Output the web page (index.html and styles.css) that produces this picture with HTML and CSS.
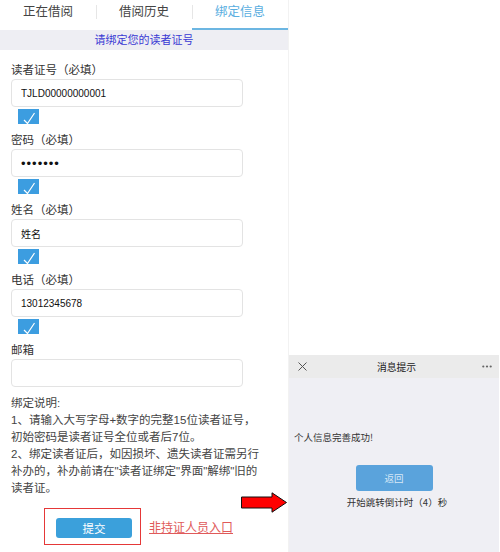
FILE: index.html
```html
<!DOCTYPE html>
<html>
<head>
    <meta charset="utf-8">
    <title>绑定信息</title>
    <link rel="stylesheet" href="styles.css">
</head>
<body>
<div class="page">
    <div class="phone">
        <div class="tabs">
            <div class="tab">正在借阅</div>
            <div class="tab">借阅历史</div>
            <div class="tab active">绑定信息</div>
        </div>
        <div class="notice">请绑定您的读者证号</div>
        <form class="form">
            <div class="field">
                <label>读者证号（必填）</label>
                <input class="input" type="text" value="TJLD00000000001">
                <span class="check"><svg width="21" height="15" viewBox="0 0 21 15"><path d="M6 11 L9.5 14.5 L16.5 4" fill="none" stroke="#fff" stroke-width="1.2"/></svg></span>
            </div>
            <div class="field">
                <label>密码（必填）</label>
                <input class="input pwd" type="password" value="1234567">
                <span class="check"><svg width="21" height="15" viewBox="0 0 21 15"><path d="M6 11 L9.5 14.5 L16.5 4" fill="none" stroke="#fff" stroke-width="1.2"/></svg></span>
            </div>
            <div class="field">
                <label>姓名（必填）</label>
                <input class="input" type="text" value="姓名">
                <span class="check"><svg width="21" height="15" viewBox="0 0 21 15"><path d="M6 11 L9.5 14.5 L16.5 4" fill="none" stroke="#fff" stroke-width="1.2"/></svg></span>
            </div>
            <div class="field">
                <label>电话（必填）</label>
                <input class="input" type="text" value="13012345678">
                <span class="check"><svg width="21" height="15" viewBox="0 0 21 15"><path d="M6 11 L9.5 14.5 L16.5 4" fill="none" stroke="#fff" stroke-width="1.2"/></svg></span>
            </div>
            <div class="field">
                <label>邮箱</label>
                <input class="input" type="text" value="">
            </div>
            <div class="tips">
                绑定说明:<br>
                1、请输入大写字母+数字的完整15位读者证号，<br>
                初始密码是读者证号全位或者后7位。<br>
                2、绑定读者证后，如因损坏、遗失读者证需另行<br>
                补办的，补办前请在"读者证绑定"界面"解绑"旧的<br>
                读者证。
            </div>
            <div class="actions">
                <div class="mark">
                    <button class="submit" type="button">提交</button>
                </div>
                <a class="other" href="#">非持证人员入口</a>
            </div>
        </form>
    </div>
    <div class="dialog">
        <div class="dialog-head">
            <svg class="close" width="9" height="9" viewBox="0 0 9 9"><path d="M0.5 0.5 L8.5 8.5 M8.5 0.5 L0.5 8.5" stroke="#555" stroke-width="1"/></svg>
            <span class="dialog-title">消息提示</span>
            <svg class="more" width="10" height="3" viewBox="0 0 10 3"><circle cx="1.3" cy="1.5" r="1.1" fill="#666"/><circle cx="5" cy="1.5" r="1.1" fill="#666"/><circle cx="8.7" cy="1.5" r="1.1" fill="#666"/></svg>
        </div>
        <div class="dialog-body">
            <p class="msg">个人信息完善成功!</p>
            <button class="back" type="button">返回</button>
            <p class="count">开始跳转倒计时（4）秒</p>
        </div>
    </div>
    <svg class="arrow" width="47" height="21" viewBox="0 0 47 21">
        <polygon points="0.5,5 31,5 31,0.8 45.5,10.5 31,20.2 31,16 0.5,16" fill="#f00" stroke="#111" stroke-width="1"/>
    </svg>
</div>
</body>
</html>
```

FILE: styles.css
```css
body{
    margin: 0;
    background: #fff;
    font-family: "Liberation Sans", "Noto Sans CJK SC", sans-serif;
    color: #333;
}
.page{
    position: relative;
    display: flex;
    align-items: flex-start;
    width: 500px;
    height: 552px;
    overflow: hidden;
}
.phone{
    width: 288px;
    height: 552px;
    border-right: 1px solid #f2f2f2;
}
.tabs{
    display: flex;
    height: 30px;
}
.tab{
    flex: 1;
    position: relative;
    text-align: center;
    font-size: 12.5px;
    line-height: 24px;
    color: #444;
    box-sizing: border-box;
    border-bottom: 2px solid transparent;
}
.tab + .tab:before{
    content: "";
    position: absolute;
    left: 0;
    top: 5px;
    height: 14px;
    border-left: 1px solid #e6e6e6;
}
.tab.active{
    color: #5aaedf;
    border-bottom-color: #6cb6e2;
}
.notice{
    height: 20px;
    line-height: 21px;
    background: #eeeef3;
    text-align: center;
    font-size: 11px;
    color: #3a3ad4;
}
.form{
    margin: 0;
    padding: 11px 0 0 11px;
}
.field{
    display: flex;
    flex-direction: column;
    align-items: flex-start;
    margin-bottom: 7px;
}
.field label{
    font-size: 11.5px;
    line-height: 18px;
    height: 18px;
}
.input{
    box-sizing: border-box;
    width: 232px;
    height: 28px;
    margin: 0;
    padding: 0 9px;
    border: 1px solid #e3e3e3;
    border-radius: 4px;
    font-family: "Liberation Sans", "Noto Sans CJK SC", sans-serif;
    font-size: 10px;
    color: #111;
    outline: none;
}
.input.pwd{
    font-size: 13px;
    letter-spacing: 1px;
}
.check{
    display: block;
    width: 21px;
    height: 15px;
    margin: 2px 0 0 7px;
    background: #3c9de0;
}
.check svg{
    display: block;
}
.field:nth-child(5){
    margin-bottom: 8px;
}
.tips{
    font-size: 11.5px;
    line-height: 17px;
    color: #444;
}
.actions{
    display: flex;
    align-items: center;
    margin-top: 11px;
    padding-left: 33px;
}
.mark{
    border: 1.5px solid #e53838;
    padding: 9px 8px 6px 11px;
}
.submit{
    display: block;
    width: 76px;
    height: 20px;
    border: none;
    border-radius: 3px;
    background: #3ba0db;
    color: #fff;
    font-family: "Noto Sans CJK SC", sans-serif;
    font-size: 11.5px;
    padding: 0;
}
.other{
    margin-left: 8px;
    font-size: 12px;
    color: #e05a5a;
    text-decoration: underline;
}
.dialog{
    width: 210px;
    height: 197px;
    margin: 355px 0 0 0;
    background: #efeff4;
}
.dialog-head{
    display: flex;
    align-items: center;
    justify-content: space-between;
    height: 23px;
    padding: 0 7px 0 9px;
    background: #ebebeb;
    font-family: "Noto Sans CJK SC", sans-serif;
}
.close,
.more{
    display: block;
}
.dialog-title{
    font-size: 9.8px;
    color: #222;
    margin-left: 4px;
}
.dialog-body{
    display: flex;
    flex-direction: column;
    align-items: center;
    font-family: "Noto Sans CJK SC", sans-serif;
}
.msg{
    align-self: flex-start;
    margin: 52px 0 0 5px;
    font-size: 9.5px;
    line-height: 14px;
}
.back{
    margin-top: 21px;
    width: 77px;
    height: 26px;
    border: none;
    border-radius: 3px;
    background: #5aa3dc;
    color: #d7e8f7;
    font-family: "Noto Sans CJK SC", sans-serif;
    font-size: 9.5px;
}
.count{
    margin: 4px 0 0 6px;
    font-size: 9.5px;
    line-height: 14px;
}
.arrow{
    position: absolute;
    left: 241px;
    top: 492px;
}
```
